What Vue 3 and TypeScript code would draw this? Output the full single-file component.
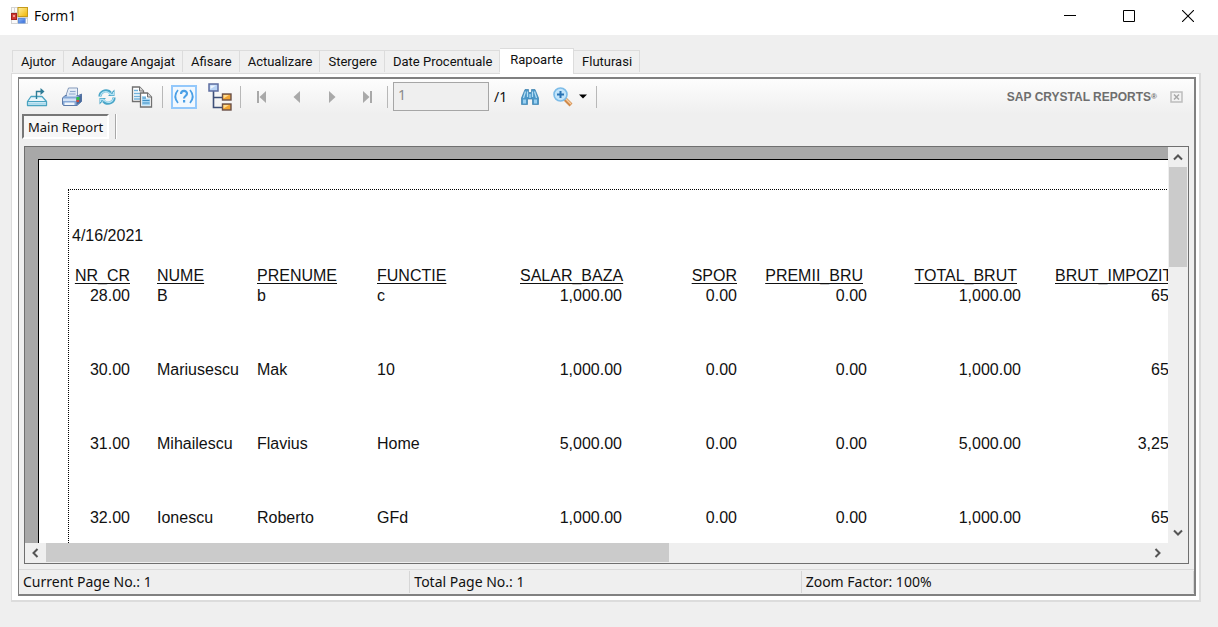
<script setup lang="ts">
import { ref } from 'vue'

interface ReportRow {
  nr: string
  nume: string
  prenume: string
  functie: string
  salar: string
  spor: string
  premii: string
  total: string
  impozit: string
}

const tabs: string[] = [
  'Ajutor',
  'Adaugare Angajat',
  'Afisare',
  'Actualizare',
  'Stergere',
  'Date Procentuale',
  'Rapoarte',
  'Fluturasi',
]
const activeTab = ref('Rapoarte')
const pageNumber = ref('1')

const rows: ReportRow[] = [
  { nr: '28.00', nume: 'B', prenume: 'b', functie: 'c', salar: '1,000.00', spor: '0.00', premii: '0.00', total: '1,000.00', impozit: '650.00' },
  { nr: '30.00', nume: 'Mariusescu', prenume: 'Mak', functie: '10', salar: '1,000.00', spor: '0.00', premii: '0.00', total: '1,000.00', impozit: '650.00' },
  { nr: '31.00', nume: 'Mihailescu', prenume: 'Flavius', functie: 'Home', salar: '5,000.00', spor: '0.00', premii: '0.00', total: '5,000.00', impozit: '3,250.00' },
  { nr: '32.00', nume: 'Ionescu', prenume: 'Roberto', functie: 'GFd', salar: '1,000.00', spor: '0.00', premii: '0.00', total: '1,000.00', impozit: '650.00' },
]
</script>

<template>
  <div class="window">
    <header class="titlebar">
      <svg class="app-icon" width="18" height="18" viewBox="0 0 18 18" aria-hidden="true">
        <defs>
          <linearGradient id="gy" x1="0" y1="0" x2="1" y2="1"><stop offset="0" stop-color="#fff0a0" /><stop offset="1" stop-color="#f0b400" /></linearGradient>
          <linearGradient id="gb" x1="0" y1="0" x2="1" y2="1"><stop offset="0" stop-color="#8fb8f8" /><stop offset="1" stop-color="#2f66d8" /></linearGradient>
        </defs>
        <rect x="0" y="0" width="17" height="17" fill="#d4d4d4" />
        <path d="M1 1H3V5H1ZM4 1H6V5H4ZM1 13H6V16H1ZM15 12H16V16H15Z" fill="#fafafa" />
        <rect x="7" y="0.500" width="9.500" height="9" fill="url(#gy)" stroke="#c49a1c" />
        <rect x="0.500" y="6.500" width="5" height="6" fill="#cf3a34" stroke="#a3221e" />
        <rect x="2" y="8" width="2" height="2" fill="#f09a90" />
        <rect x="7.500" y="11.500" width="6.500" height="4.500" fill="url(#gb)" stroke="#5f8fdc" />
      </svg>
      <span class="title">Form1</span>
      <div class="caption-buttons">
        <button aria-label="Minimize"><svg width="12" height="12"><path d="M0 5.5H12" stroke="#000" /></svg></button>
        <button aria-label="Maximize"><svg width="12" height="12"><path d="M.5 .5H11.500V11.500H.5Z" fill="none" stroke="#000" /></svg></button>
        <button aria-label="Close"><svg width="12" height="12"><path d="M0 0L12 12M12 0L0 12" stroke="#000" stroke-width="1.1" /></svg></button>
      </div>
    </header>

    <main class="client">
      <div class="tabs" role="tablist">
        <button
          v-for="tab in tabs"
          :key="tab"
          role="tab"
          class="tab"
          :class="{ active: tab === activeTab }"
          :aria-selected="tab === activeTab"
          @click="activeTab = tab"
        >{{ tab }}</button>
      </div>

      <section class="tab-page">
        <div class="viewer">
          <div class="toolbar">
            <button class="tool" aria-label="Export report">
              <svg width="22" height="20" viewBox="0 0 22 20">
                <path d="M5 9.500H16L20.500 14.500V18.500H1.500V14.500Z" fill="#eaf6fb" stroke="#4aa3c0" stroke-width="1.3" stroke-linejoin="round" />
                <path d="M1.500 14.500H20.500" stroke="#4aa3c0" />
                <path d="M2 16.500H20" stroke="#a9d9ec" stroke-width="2" />
                <path d="M10.500 12V4.500H16" fill="none" stroke="#2e7c96" stroke-width="1.4" />
                <path d="M14.500 1L18.500 4.500L14.500 8Z" fill="#2e7c96" />
              </svg>
            </button>
            <button class="tool" aria-label="Print report">
              <svg width="22" height="20" viewBox="0 0 22 20">
                <path d="M7.500 1H16.500V10H4.500Z" fill="#f5f8fc" stroke="#8096b8" />
                <path d="M9 3.500H15M8 6H15M7 8.500H15" stroke="#9fb4d2" />
                <path d="M1.500 11L4 8.500H17.500L20.500 7V14.500L16 18.500H2.500L1.500 17Z" fill="#86a9d8" stroke="#5d7ba8" />
                <path d="M5.500 9.500L8 2.500H15.500V9.500Z" fill="#dfe9f6" />
                <path d="M9 4.500H14.500M8 7H14.500" stroke="#8ea9cf" />
                <path d="M15.500 11L20.500 7.500V14.500L15.500 18Z" fill="#4a6a9c" />
                <path d="M2 11.500H15V14H2Z" fill="#d3e2f5" />
                <path d="M3.500 15.500H13.500V18H3.500Z" fill="#f1f6fc" />
                <rect x="15.500" y="10" width="3" height="3" fill="#2fbf46" /><rect x="15.500" y="13" width="2.500" height="2" fill="#d1483a" />
              </svg>
            </button>
            <button class="tool" aria-label="Refresh">
              <svg width="18" height="18" viewBox="0 0 18 18">
                <path d="M2 8.500C2 4 7 1.500 11 3.500L12.500 5" fill="none" stroke="#4aa6c8" stroke-width="3.2" />
                <path d="M16.500 1.500V8H10Z" fill="#4aa6c8" />
                <path d="M16 9.500C16 14 11 16.500 7 14.500L5.500 13" fill="none" stroke="#4aa6c8" stroke-width="3.2" />
                <path d="M1.500 16.500V10H8Z" fill="#4aa6c8" />
                <path d="M2.500 8C3 4.500 7 2.500 10.500 4.500L13 6.500H15.500V4M15.500 10C15 13.500 11 15.500 7.500 13.500L5 11.500H2.500V14" fill="none" stroke="#b4e3f5" stroke-width="1.3" />
              </svg>
            </button>
            <button class="tool" aria-label="Copy">
              <svg width="22" height="22" viewBox="0 0 22 22">
                <path d="M1.500 1H8.500L12.500 5V15.500H1.500Z" fill="#fff" stroke="#707070" stroke-width="1.3" />
                <path d="M8.500 1V5H12.500" fill="#d9d9d9" stroke="#707070" />
                <path d="M3 4.500H7M3 7.500H9M3 10.500H9M3 13H9" stroke="#73b3dc" stroke-width="1.4" />
                <path d="M9.500 7H16.500L20.500 11V21H9.500Z" fill="#fff" stroke="#707070" stroke-width="1.3" />
                <path d="M16.500 7V11H20.500" fill="#d9d9d9" stroke="#707070" />
                <path d="M11 10H15V12.500H19V19.500H11Z" fill="#a8d7f3" />
                <path d="M11.500 12H15M11.500 14.500H18.500M11.500 17H18.500" stroke="#3f8fc4" />
              </svg>
            </button>
            <span class="sep"></span>
            <button class="tool wide" aria-label="Toggle parameter panel">
              <svg width="26" height="24" viewBox="0 0 26 24">
                <rect x="1" y="1" width="24" height="22" fill="#f2f8fe" stroke="#93c8fb" stroke-width="2" />
                <path d="M7 5Q1.500 11.500 7 18M19 5Q24.500 11.500 19 18" fill="none" stroke="#4a9fe6" stroke-width="1.700" />
                <path d="M10 9C10 5 16 5 16 8.500C16 11 13 11 13 13.500" fill="none" stroke="#4a9fe6" stroke-width="2.200" />
                <rect x="12" y="15" width="2.200" height="2.500" fill="#4a9fe6" />
              </svg>
            </button>
            <button class="tool" aria-label="Toggle group tree">
              <svg width="24" height="28" viewBox="0 0 24 28">
                <path d="M5.500 8V24.500H14M5.500 14.500H14" fill="none" stroke="#3d4f78" stroke-width="1.600" />
                <rect x="1" y="1" width="9" height="7" fill="#b9d4f6" stroke="#5e6da0" stroke-width="1.500" />
                <path d="M2.500 2.500H8L2.500 6Z" fill="#eef5fe" />
                <rect x="14.500" y="11" width="8.500" height="6" fill="#f2a432" stroke="#6b5048" stroke-width="1.400" />
                <path d="M15.500 12H21L15.500 15.500Z" fill="#ffdc90" />
                <rect x="14.500" y="21" width="8.500" height="6" fill="#f2a432" stroke="#6b5048" stroke-width="1.400" />
                <path d="M15.500 22H21L15.500 25.500Z" fill="#ffdc90" />
              </svg>
            </button>
            <span class="sep"></span>
            <button class="tool" disabled aria-label="First page"><svg width="10" height="12"><path d="M1 0V12" stroke="#a9a9a9" stroke-width="2" /><path d="M9 0V12L2.500 6Z" fill="#a9a9a9" /></svg></button>
            <button class="tool" disabled aria-label="Previous page"><svg width="8" height="12"><path d="M7 0V12L.5 6Z" fill="#a9a9a9" /></svg></button>
            <button class="tool" disabled aria-label="Next page"><svg width="8" height="12"><path d="M1 0V12L7.500 6Z" fill="#a9a9a9" /></svg></button>
            <button class="tool" disabled aria-label="Last page"><svg width="10" height="12"><path d="M9 0V12" stroke="#a9a9a9" stroke-width="2" /><path d="M1 0V12L7.500 6Z" fill="#a9a9a9" /></svg></button>
            <span class="sep"></span>
            <input v-model="pageNumber" class="page-input" type="text" disabled aria-label="Page number" />
            <span class="page-total">/1</span>
            <button class="tool" aria-label="Find text">
              <svg width="18" height="16" viewBox="0 0 18 16">
                <path d="M4 .5H7.500V3.500H10.500V.5H14L17.500 9V15.500H11.500V10H6.500V15.500H.5V9Z" fill="#4c97c8" stroke="#3a7fae" stroke-width=".7" />
                <path d="M4.500 2.500L2.500 9M6.500 2.500V8M11.500 2.500V8M13.500 2.500L15.500 9M9 5V9" stroke="#b4def5" stroke-width="1.200" />
                <rect x="2" y="10.500" width="3" height="4" fill="#9ad0f0" /><rect x="13" y="10.500" width="3" height="4" fill="#9ad0f0" />
              </svg>
            </button>
            <button class="tool zoom" aria-label="Zoom">
              <svg width="20" height="20" viewBox="0 0 20 20">
                <path d="M12 12L18 18" stroke="#d08a4a" stroke-width="4" />
                <path d="M12.500 11.500L18 17" stroke="#f9cda0" stroke-width="1.500" />
                <circle cx="7.500" cy="7.500" r="6.500" fill="#c3e5fb" stroke="#7dbce8" stroke-width="1.600" />
                <path d="M7.500 4V11M4 7.500H11" stroke="#2a73b4" stroke-width="2" />
              </svg>
              <svg width="8" height="5"><path d="M0 .5H8L4 4.500Z" fill="#000" /></svg>
            </button>
            <span class="sep"></span>
            <span class="brand">SAP CRYSTAL REPORTS<span class="reg">®</span></span>
            <button class="tool-close" aria-label="Close view">
              <svg width="13" height="12" viewBox="0 0 13 12">
                <rect x="1" y="1" width="11" height="10" fill="#f3f3f3" stroke="#bdbdbd" stroke-width="1.500" />
                <path d="M4 3.500L9 8.500M9 3.500L4 8.500" stroke="#a8a8a8" stroke-width="1.500" />
              </svg>
            </button>
          </div>

          <div class="view-tabs">
            <button class="view-tab">Main Report</button>
            <span class="view-sep"></span>
          </div>

          <div class="report-frame">
            <div class="report-view">
              <div class="paper">
                <div class="page-body">
                  <time class="date" datetime="2021-04-16">4/16/2021</time>
                  <table class="report">
                    <colgroup>
                      <col class="c-nr" /><col class="c-nume" /><col class="c-prenume" /><col class="c-functie" /><col class="c-salar" />
                      <col class="c-spor" /><col class="c-premii" /><col class="c-total" /><col class="c-impozit" />
                    </colgroup>
                    <thead>
                      <tr>
                        <th class="num">NR_CR</th>
                        <th class="nume">NUME</th>
                        <th>PRENUME</th>
                        <th>FUNCTIE</th>
                        <th>SALAR_BAZA</th>
                        <th class="num">SPOR</th>
                        <th class="num inset">PREMII_BRU</th>
                        <th class="num inset">TOTAL_BRUT</th>
                        <th class="impozit">BRUT_IMPOZIT</th>
                      </tr>
                    </thead>
                    <tbody>
                      <tr v-for="row in rows" :key="row.nr">
                        <td class="num">{{ row.nr }}</td>
                        <td class="nume">{{ row.nume }}</td>
                        <td>{{ row.prenume }}</td>
                        <td>{{ row.functie }}</td>
                        <td class="num">{{ row.salar }}</td>
                        <td class="num">{{ row.spor }}</td>
                        <td class="num">{{ row.premii }}</td>
                        <td class="num">{{ row.total }}</td>
                        <td class="num">{{ row.impozit }}</td>
                      </tr>
                    </tbody>
                  </table>
                </div>
              </div>
            </div>
            <div class="vscroll">
              <button aria-label="Scroll up"><svg width="10" height="8"><path d="M1 6.500L5 2.500L9 6.500" /></svg></button>
              <div class="track"><div class="thumb"></div></div>
              <button aria-label="Scroll down"><svg width="10" height="8"><path d="M1 1.500L5 5.500L9 1.500" /></svg></button>
            </div>
            <div class="hscroll">
              <button aria-label="Scroll left"><svg width="8" height="10"><path d="M6.500 1L2.500 5L6.500 9" /></svg></button>
              <div class="track"><div class="thumb"></div></div>
              <button aria-label="Scroll right"><svg width="8" height="10"><path d="M1.500 1L5.500 5L1.500 9" /></svg></button>
            </div>
            <div class="corner"></div>
          </div>

          <footer class="status">
            <span>Current Page No.: 1</span>
            <span>Total Page No.: 1</span>
            <span>Zoom Factor: 100%</span>
          </footer>
        </div>
      </section>
    </main>
  </div>
</template>

<style>
body {
  margin: 0;
}
</style>

<style scoped>
* {
  box-sizing: border-box;
}
button {
  margin: 0;
  padding: 0;
  border: 0;
  background: none;
  font: inherit;
  color: inherit;
}
svg {
  display: block;
  flex: none;
}
.window {
  display: flex;
  flex-direction: column;
  height: 100vh;
  background: #efefef;
  color: #111;
  font-family: Roboto, "Liberation Sans", sans-serif;
  font-size: 13px;
}
.titlebar {
  display: flex;
  align-items: center;
  flex: none;
  height: 35px;
  padding: 0 1px 4px 11px;
  background: #fff;
  color: #000;
}
.title {
  margin-left: 5px;
  font-family: "Open Sans", "Noto Sans", sans-serif;
  font-size: 14px;
}
.caption-buttons {
  display: flex;
  margin-left: auto;
}
.caption-buttons button {
  display: flex;
  align-items: center;
  justify-content: center;
  width: 59px;
  height: 31px;
}
.client {
  display: flex;
  flex: 1;
  flex-direction: column;
  min-height: 0;
  padding: 13px 17px 25px 11px;
}
.tabs {
  display: flex;
  align-items: flex-end;
  padding-left: 1px;
}
.tab {
  height: 22px;
  margin-bottom: 1px;
  padding: 0 7px 0 8px;
  border: 1px solid #dcdcdc;
  border-bottom: 0;
  border-left-width: 0;
  background: #f0f0f0;
  line-height: 22px;
  white-space: nowrap;
}
.tab:first-child {
  border-left-width: 1px;
}
.tab.active {
  position: relative;
  height: 26px;
  margin-bottom: -1px;
  padding: 0 10px 4px;
  background: #fff;
}
.tab-page {
  display: flex;
  flex: 1;
  min-height: 0;
  padding: 3px 3px 4px 6px;
  border: 1px solid #dcdcdc;
  border-width: 1px 2px 2px 1px;
  background: #fff;
}
.viewer {
  display: flex;
  flex: 1;
  flex-direction: column;
  min-width: 0;
  border: 1px solid #808080;
  border-width: 2px 2px 2px 1px;
  background: #efefef;
}
.toolbar {
  display: flex;
  align-items: center;
  flex: none;
  height: 35px;
  background: linear-gradient(#fdfdfd, #efefef);
}
.tool {
  display: flex;
  align-items: center;
  justify-content: center;
  flex: none;
  width: 35px;
  height: 32px;
}
.tool.wide {
  width: 36px;
}
.tool.zoom {
  gap: 6px;
  width: 46px;
}
.sep {
  flex: none;
  width: 1px;
  height: 22px;
  margin: 0 3px;
  background: #b8b8b8;
}
.page-input {
  width: 96px;
  height: 29px;
  margin-left: 2px;
  padding: 0 4px 4px;
  border: 1px solid #a6a6a6;
  border-radius: 0;
  background: #efefef;
  color: #8a8a8a;
  font-family: "Noto Sans", sans-serif;
  font-size: 14px;
}
.page-total {
  flex: none;
  width: 23px;
  padding-left: 5px;
  font-family: "Noto Sans", sans-serif;
  font-size: 14px;
}
.brand {
  margin-left: auto;
  color: #6e6e6e;
  font-family: "Liberation Sans", sans-serif;
  font-size: 12px;
  font-weight: bold;
  white-space: nowrap;
}
.reg {
  font-size: 8px;
  vertical-align: 2px;
}
.tool-close {
  margin: 0 11px 0 13px;
}
.view-tabs {
  display: flex;
  flex: none;
  height: 32px;
  padding-left: 3px;
}
.view-tab {
  height: 25px;
  padding: 0 4px;
  border: 2px solid #fff;
  border-top-color: #777;
  border-left-color: #777;
  background: #f7f7f7;
  font-family: "Noto Sans", sans-serif;
  font-size: 13px;
  line-height: 20px;
  white-space: nowrap;
}
.view-sep {
  width: 2px;
  height: 25px;
  margin-left: 6px;
  border-left: 1px solid #a8a8a8;
  border-right: 1px solid #fff;
}
.report-frame {
  display: grid;
  flex: 1;
  grid-template-rows: minmax(0, 1fr) 20px;
  grid-template-columns: minmax(0, 1fr) 20px;
  min-height: 0;
  margin: 0 5px 5px;
  border: 1px solid #6f6f6f;
  background: #efefef;
}
.report-view {
  overflow: hidden;
  padding: 12px 0 0 13px;
  background: #a8a8a8;
}
.paper {
  width: 1480px;
  min-height: 100%;
  padding: 29px 0 0 29px;
  border: 1px solid #000;
  background: #fff;
}
.page-body {
  height: 900px;
  border: 1px dotted #000;
  font-family: "Liberation Sans", Arial, sans-serif;
  font-size: 16px;
  line-height: 20px;
}
.date {
  display: block;
  padding: 36px 0 20px 3px;
}
.report {
  width: 1131px;
  table-layout: fixed;
  border-collapse: collapse;
}
.c-nr {
  width: 61px;
}
.c-nume {
  width: 127px;
}
.c-prenume {
  width: 120px;
}
.c-functie {
  width: 143px;
}
.c-salar {
  width: 102px;
}
.c-spor {
  width: 115px;
}
.c-premii {
  width: 130px;
}
.c-total {
  width: 154px;
}
.c-impozit {
  width: 179px;
}
.report th,
.report td {
  padding: 0;
  font-weight: normal;
  text-align: left;
  vertical-align: top;
  white-space: nowrap;
}
.report th {
  height: 20px;
  text-decoration: underline;
  text-decoration-skip-ink: none;
  text-underline-offset: 2px;
}
.report td {
  height: 74px;
}
.report .num {
  text-align: right;
}
.report .inset {
  padding-right: 4px;
}
.report .nume {
  padding-left: 27px;
}
.report .impozit {
  padding-left: 34px;
}
.vscroll,
.hscroll {
  display: flex;
}
.vscroll {
  flex-direction: column;
}
.vscroll button,
.hscroll button {
  display: flex;
  align-items: center;
  justify-content: center;
  flex: none;
  width: 20px;
  height: 20px;
}
.vscroll path,
.hscroll path {
  fill: none;
  stroke: #555;
  stroke-width: 2;
}
.track {
  flex: 1;
}
.thumb {
  background: #cbcbcb;
}
.vscroll .thumb {
  width: 18px;
  height: 28%;
  margin-left: 1px;
}
.hscroll .thumb {
  width: 56.5%;
  height: 19px;
  margin-left: 1px;
}
.status {
  display: grid;
  flex: none;
  grid-template-columns: 391fr 391fr 392fr;
  height: 25px;
  padding: 1px 0;
  border-top: 1px solid #dadada;
  font-family: "Noto Sans", sans-serif;
  font-size: 14px;
  line-height: 22px;
}
.status span {
  padding-left: 4px;
  border-right: 1px solid #d6d6d6;
  white-space: nowrap;
}
</style>
